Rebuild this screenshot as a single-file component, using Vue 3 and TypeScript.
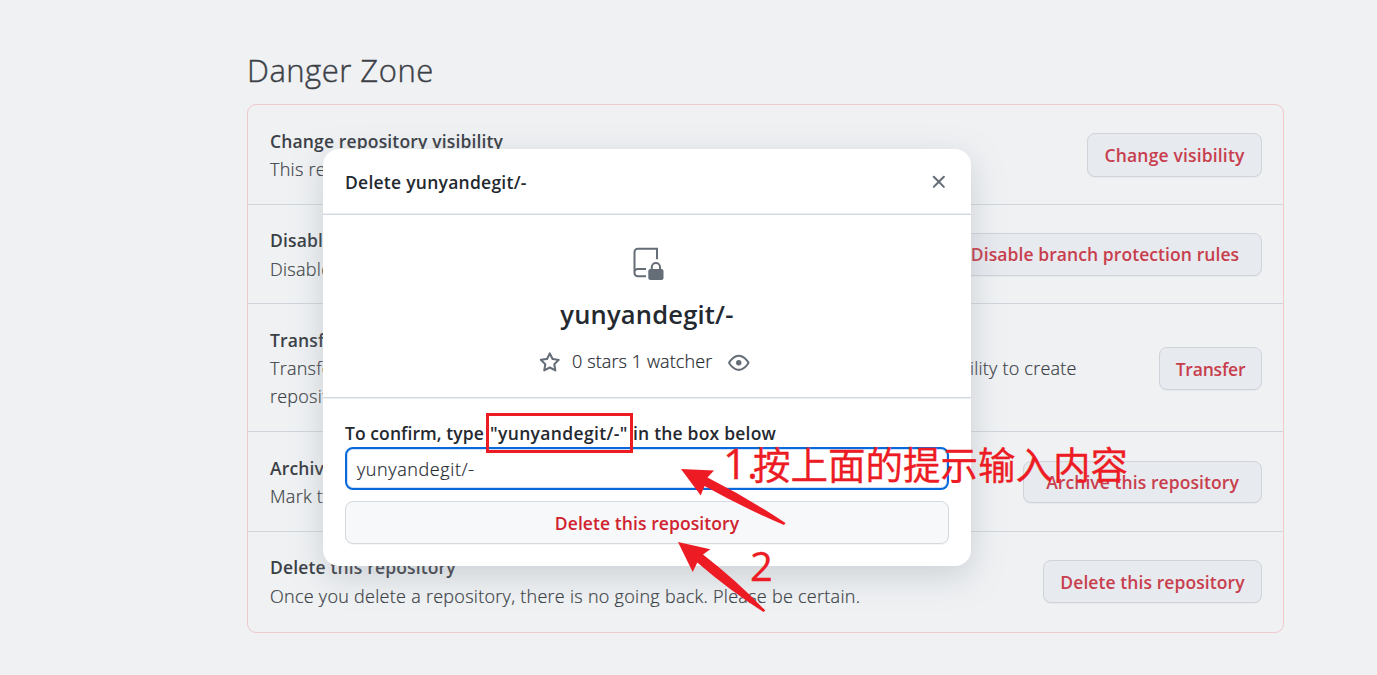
<script setup lang="ts">
interface Row {
  id: string
  title: string
  text: string
  action: string
}

const rows: Row[] = [
  { id: 'visibility', title: 'Change repository visibility', text: 'This repository is currently public.', action: 'Change visibility' },
  { id: 'branch', title: 'Disable branch protection rules', text: 'Disable branch protection rules enforcement and APIs', action: 'Disable branch protection rules' },
  { id: 'transfer', title: 'Transfer ownership', text: 'Transfer this repository to another user or to an organization where you have the ability to create repositories.', action: 'Transfer' },
  { id: 'archive', title: 'Archive this repository', text: 'Mark this repository as archived and read-only.', action: 'Archive this repository' },
  { id: 'delete', title: 'Delete this repository', text: 'Once you delete a repository, there is no going back. Please be certain.', action: 'Delete this repository' },
]
</script>

<template>
  <main class="page">
    <h2 class="heading"><span>Danger Zone</span></h2>
    <section class="zone">
      <div v-for="row in rows" :key="row.id" class="row" :class="row.id">
        <div class="copy">
          <strong>{{ row.title }}</strong>
          <p>{{ row.text }}</p>
        </div>
        <button class="btn" type="button"><span>{{ row.action }}</span></button>
      </div>
    </section>

    <div class="dialog" role="dialog">
      <header class="dialog-head">
        <h1>Delete yunyandegit/-</h1>
        <svg class="close" width="21.6" height="21.6" viewBox="0 0 16 16"><path d="M3.72 3.72a.75.75 0 0 1 1.06 0L8 6.94l3.22-3.22a.75.75 0 1 1 1.06 1.06L9.06 8l3.22 3.22a.75.75 0 1 1-1.06 1.06L8 9.06l-3.22 3.22a.75.75 0 0 1-1.06-1.06L6.94 8 3.72 4.78a.75.75 0 0 1 0-1.06Z" /></svg>
      </header>
      <div class="summary">
        <svg class="repo" width="32" height="34" viewBox="0 0 32 34">
          <path class="line" d="M24 12.2V1.8H4.8A3.3 3.3 0 0 0 1.5 5.1V26a3.3 3.3 0 0 0 3.3 3.3h8.2M1.5 25.2a3.3 3.3 0 0 1 3.3-3.3H13" />
          <rect x="15.3" y="22" width="15.2" height="11" rx="2" />
          <path class="line" d="M18.8 22.5v-2.4a4.1 4.1 0 0 1 8.2 0v2.4" />
        </svg>
        <p class="name">yunyandegit/-</p>
        <div class="stats">
          <svg width="21.6" height="21.6" viewBox="0 0 16 16"><path d="M8 .25a.75.75 0 0 1 .673.418l1.882 3.815 4.21.612a.75.75 0 0 1 .416 1.279l-3.046 2.97.719 4.192a.751.751 0 0 1-1.088.791L8 12.347l-3.766 1.98a.75.75 0 0 1-1.088-.79l.72-4.194L.818 6.374a.75.75 0 0 1 .416-1.28l4.21-.611L7.327.668A.75.75 0 0 1 8 .25Zm0 2.445L6.615 5.5a.75.75 0 0 1-.564.41l-3.097.45 2.24 2.184a.75.75 0 0 1 .216.664l-.528 3.084 2.769-1.456a.75.75 0 0 1 .698 0l2.77 1.456-.53-3.084a.75.75 0 0 1 .216-.664l2.24-2.183-3.096-.45a.75.75 0 0 1-.564-.41L8 2.694Z" /></svg>
          <span>0 stars 1 watcher</span>
          <svg width="21.6" height="21.6" viewBox="0 0 16 16"><path d="M8 2c1.981 0 3.671.992 4.933 2.078 1.27 1.091 2.187 2.345 2.637 3.023a1.62 1.62 0 0 1 0 1.798c-.45.678-1.367 1.932-2.637 3.023C11.67 13.008 9.981 14 8 14s-3.671-.992-4.933-2.078C1.797 10.83.88 9.576.43 8.898a1.62 1.62 0 0 1 0-1.798c.45-.677 1.367-1.931 2.637-3.022C4.33 2.992 6.019 2 8 2ZM1.679 7.932a.12.12 0 0 0 0 .136c.411.622 1.241 1.75 2.366 2.717C5.176 11.758 6.527 12.5 8 12.5s2.825-.742 3.955-1.715c1.124-.967 1.954-2.096 2.366-2.717a.12.12 0 0 0 0-.136c-.412-.621-1.242-1.75-2.366-2.717C10.824 4.242 9.473 3.5 8 3.5s-2.824.742-3.955 1.715c-1.124.967-1.954 2.096-2.366 2.717ZM8 10a2 2 0 1 1-.001-3.999A2 2 0 0 1 8 10Z" /></svg>
        </div>
      </div>
      <div class="confirm">
        <label><span class="before">To confirm, type</span><span class="quoted">"yunyandegit/-"</span><span class="after">in the box below</span></label>
        <div class="field"><span>yunyandegit/-</span></div>
        <button class="btn wide" type="button"><span>Delete this repository</span></button>
      </div>
    </div>

    <svg class="marks" width="1377" height="675" viewBox="0 0 1377 675">
      <rect x="487.5" y="414.5" width="144" height="37" />
      <path d="M681 469 714 470.5 707.5 477.5Q748 498 785.5 523L784 525Q744 508 704.5 486L700.7 495.5Z" />
      <path d="M678 542 710.3 549.3 703 554.5Q736 580 765.3 610.5L763.5 612Q729 590 697.3 562.5L692.7 572Z" />
    </svg>
    <div class="note first"><span class="num">1.</span><span class="han">按上面的提示输入内容</span></div>
    <div class="note second">2</div>
  </main>
</template>

<style>
body { margin: 0; background: #eff1f3; }
</style>

<style scoped>
* { box-sizing: border-box; }
.page { position: relative; width: 1377px; height: 675px; overflow: hidden; padding: 48px 93px 0 247px; background: #eff1f3; color: #3b3f46; font: 300 18px/28.35px "Open Sans", "Noto Sans", sans-serif; letter-spacing: 0.275px; -webkit-text-stroke: 0.2px; }
.heading { margin: 0; height: 56px; font-size: 31px; line-height: 44px; font-weight: 300; letter-spacing: 0.5px; -webkit-text-stroke: 0.4px; white-space: nowrap; }
p { margin: 0; }
.zone { width: 1037px; height: 529px; border: 1px solid #f0c9cc; border-radius: 9px; }
.row { display: flex; align-items: center; justify-content: space-between; height: 100px; padding: 0 21px 0 22px; border-bottom: 1px solid #d0d5dc; }
.row.visibility { padding-top: 1px; }
.row.branch { height: 99px; padding-top: 1px; }
.row.branch .btn { padding-bottom: 2px; }
.row.transfer { height: 128px; padding-top: 2px; }
.row.transfer .copy { line-height: 28px; padding-bottom: 2px; letter-spacing: 0.23px; }
.row.archive { padding-top: 1px; }
.row:last-child { height: 100px; padding-bottom: 1px; border: 0; }
.copy { width: 818px; flex: none; margin-right: -300px; }
.copy strong { display: block; font-weight: 600; font-size: 17.5px; letter-spacing: 0.15px; -webkit-text-stroke: 0; white-space: nowrap; }
.btn { height: 43px; flex: none; padding: 0; border: 1px solid #d0d3da; border-radius: 8px; background: #e7eaef; color: #c83e4d; font: 600 17.5px/28px "Open Sans", "Noto Sans", sans-serif; letter-spacing: 0.08px; -webkit-text-stroke: 0; white-space: nowrap; box-shadow: 0 1px 0 rgba(31,35,40,.04); }
.visibility .btn { width: 175px; height: 44px; letter-spacing: 0.16px; }
.branch .btn { width: 314px; }
.transfer .btn { width: 103px; letter-spacing: -0.2px; }
.archive .btn { width: 239px; height: 42px; }
.delete .btn { width: 219px; }
.dialog { position: absolute; left: 323px; top: 149px; width: 648px; height: 417px; border-radius: 16px; background: #fff; color: #24292f; box-shadow: 0 10px 32px rgba(140,149,159,.35); }
.dialog-head { height: 66px; display: flex; align-items: center; justify-content: space-between; padding: 2px 21px 1px 22px; border-bottom: 1px solid #d0d7de; box-shadow: inset 0 -1px #edf0f3; }
h1 { margin: 0; font-size: 17.5px; font-weight: 600; line-height: 28px; letter-spacing: 0.25px; -webkit-text-stroke: 0; white-space: nowrap; }
svg { fill: #656d76; flex: none; }
.summary { height: 183px; padding-top: 32px; display: flex; flex-direction: column; align-items: center; border-bottom: 1px solid #d0d7de; box-shadow: 0 1px #edf0f3; }
.repo { margin-left: 4px; }
.repo .line { fill: none; stroke: #656d76; stroke-width: 2; }
.name { margin-top: 15px; font-size: 25.5px; line-height: 36px; font-weight: 600; letter-spacing: 0.2px; -webkit-text-stroke: 0; white-space: nowrap; }
.stats { display: flex; align-items: center; margin: 14px 5px 0 0; height: 30px; white-space: nowrap; }
.stats svg { margin-top: 3px; }
.stats span { width: 140px; margin: 0 16px 0 11px; letter-spacing: 0.1px; }
.confirm { padding: 21px 22px; }
label { display: flex; height: 28px; font-size: 17.5px; font-weight: 600; letter-spacing: 0.2px; -webkit-text-stroke: 0; white-space: nowrap; }
.before { width: 145px; letter-spacing: 0.08px; }
.quoted { width: 143px; letter-spacing: 0.35px; }
.field { height: 43px; padding: 7px 10px; border: 2px solid #0969da; border-radius: 8px; line-height: 27px; letter-spacing: 0.6px; background: #fff; box-shadow: inset 0 0 0 1px rgba(9,105,218,.2); }
.wide { display: block; width: 604px; margin-top: 11px; background: #f6f8fa; border-color: #d5d9de; color: #cf222e; }
.marks { position: absolute; inset: 0; fill: #ed1c24; }
.marks rect { fill: none; stroke: #ed1c24; stroke-width: 3; }
.note { position: absolute; color: #ed1c24; white-space: nowrap; letter-spacing: 0; -webkit-text-stroke: 0.3px; }
.first { left: 723px; top: 436px; display: flex; line-height: 54px; font-size: 37.5px; }
.num { width: 30px; font-family: "Open Sans", sans-serif; font-size: 42px; font-weight: 400; }
.han { font-family: "Noto Sans CJK SC", sans-serif; font-weight: 400; }
.second { left: 750px; top: 539px; line-height: 54px; font-size: 40px; font-family: "Open Sans", sans-serif; font-weight: 400; }
</style>
